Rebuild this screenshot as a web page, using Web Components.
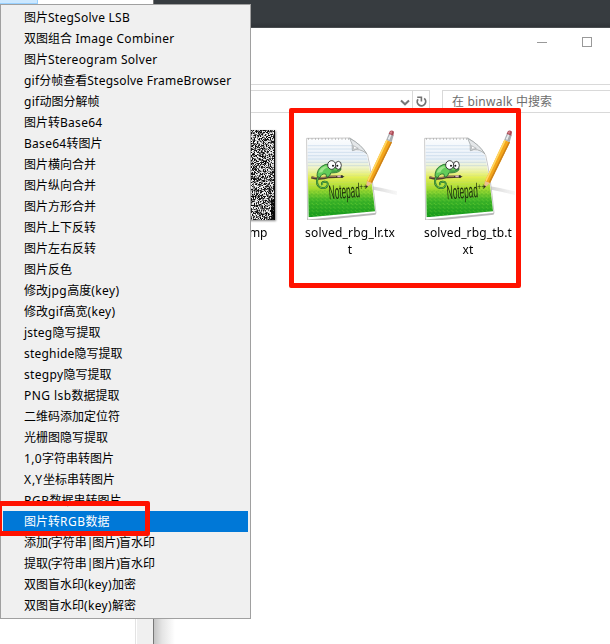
<!DOCTYPE html>
<html lang="zh-CN">
<head>
<meta charset="utf-8">
<title>binwalk</title>
<style>
html,body{margin:0;width:610px;height:644px;overflow:hidden;background:#fff}
body{font:12px "Noto Sans","Noto Sans CJK SC",sans-serif;color:#000}
</style>
</head>
<body>
<desk-top></desk-top>
<script>
const define = (name, html, ready) => customElements.define(name, class extends HTMLElement {
  connectedCallback() {
    if (this.shadowRoot) return;
    this.attachShadow({mode: 'open'}).innerHTML = html;
    if (ready) ready.call(this, this.shadowRoot);
  }
});

/* Text run whose latin parts are spaced so that the run has a given width. */
define('fit-text', `<style>:host{display:inline-block;white-space:pre}</style><span id="t"></span>`, function (root) {
  const t = root.getElementById('t');
  const parts = this.getAttribute('text').match(/[\u3000-\u9fff]+|[^\u3000-\u9fff]+/g);
  const latin = [];
  let n = 0;
  parts.forEach(p => {
    const s = document.createElement('span');
    s.textContent = p;
    if (!/[\u3000-\u9fff]/.test(p)) { latin.push(s); n += p.length; }
    t.append(s);
  });
  const w = +this.getAttribute('w');
  if (w && n) {
    const d = (w - t.getBoundingClientRect().width) / n;
    latin.forEach(s => s.style.letterSpacing = d + 'px');
  }
});

define('menu-item', `<style>
:host{display:flex;align-items:center;height:21px;padding-left:21px;line-height:21px}
:host([selected]){background:#0078d7;color:#fff}
</style><slot></slot>`);

define('context-menu', `<style>
:host{display:flex;flex-direction:column;box-sizing:border-box;width:251px;height:615px;padding:2px;border:1px solid #a0a0a0;background:#f0f0f0}
</style>`, function (root) {
  const rows = [
    ['图片StegSolve LSB',106],['双图组合 Image Combiner',150.5],['图片Stereogram Solver',133.5],
    ['gif分帧查看Stegsolve FrameBrowser',207.5],['gif动图分解帧',75.5],['图片转Base64',78.5],['Base64转图片',78.5],
    ['图片横向合并'],['图片纵向合并'],['图片方形合并'],['图片上下反转'],['图片左右反转'],['图片反色'],
    ['修改jpg高度(key)',95.5],['修改gif高宽(key)',91.5],['jsteg隐写提取',76.5],['steghide隐写提取',98.5],
    ['stegpy隐写提取',87.5],['PNG lsb数据提取',95.5],['二维码添加定位符'],['光栅图隐写提取'],
    ['1,0字符串转图片',90],['X,Y坐标串转图片',91],['RGB数据串转图片',97.5],['图片转RGB数据',85.5],
    ['添加(字符串|图片)盲水印',131],['提取(字符串|图片)盲水印',131],['双图盲水印(key)加密',112],['双图盲水印(key)解密',112]];
  rows.forEach(([text, w], i) => {
    const item = document.createElement('menu-item');
    if (i === 24) item.setAttribute('selected', '');
    const f = document.createElement('fit-text');
    f.setAttribute('text', text);
    if (w) f.setAttribute('w', w);
    item.append(f);
    root.append(item);
  });
});

/* Black and white random pixel thumbnail. */
define('noise-thumb', `<style>:host{display:block;width:46px;height:90px;box-shadow:1px 1px 2px #888}canvas{display:block}</style><canvas width="46" height="90"></canvas>`, function (root) {
  const c = root.querySelector('canvas').getContext('2d');
  let s = 12345;
  const rand = () => {
    s = (s + 0x6D2B79F5) | 0;
    let t = Math.imul(s ^ (s >>> 15), 1 | s);
    t = (t + Math.imul(t ^ (t >>> 7), 61 | t)) ^ t;
    return ((t ^ (t >>> 14)) >>> 0) % 256;
  };
  for (let y = 0; y < 90; y++) for (let x = 0; x < 46; x++) {
    const r = rand();
    const dark = x > 44 || (x > 41 && y > 68 && r > 120);
    const v = dark ? 8 : r < 85 ? r * .5 : r > 155 ? 190 + r % 66 : r;
    c.fillStyle = `rgb(${v},${v},${v})`;
    c.fillRect(x, y, 1, 1);
  }
});

define('notepad-icon', `<style>:host{display:block;width:100px;height:95px}svg{display:block}
text{font-family:"Liberation Sans",Arial,sans-serif}</style>
<svg width="100" height="95" viewBox="48 60 300 285">
<defs>
<linearGradient id="p" x1="0" y1="0" x2="0" y2="1">
<stop offset="0" stop-color="#fcfdfe"/><stop offset=".27" stop-color="#e8f0f8"/><stop offset=".38" stop-color="#f1f5c4"/>
<stop offset=".5" stop-color="#e2ee50"/><stop offset=".63" stop-color="#a8dc30"/><stop offset=".78" stop-color="#3fb528"/><stop offset="1" stop-color="#149a1c"/></linearGradient>
<linearGradient id="s" x1="0" x2="1"><stop offset="0" stop-color="#777" stop-opacity=".4"/><stop offset="1" stop-color="#aaa" stop-opacity=".1"/></linearGradient>
<pattern id="g" width="13" height="11" patternUnits="userSpaceOnUse"><path d="M1 2h3v3h-3zM8 7h3v2h-3z" fill="#087d1a" opacity=".35"/><path d="M6 1h3v2h-3zM2 8h3v2h-3z" fill="#b4f34b" opacity=".4"/></pattern>
<clipPath id="c"><path d="M67 103L194 102Q210 119 210 138Q230 131 245 151Q258 202 270 319L71 337Z"/></clipPath>
</defs>
<path d="M245 241Q284 247 336 259L335 270Q300 261 257 253Z" fill="url(#s)"/>
<path d="M66 340L70 350L272 329L273 320Z" fill="#777" opacity=".5"/>
<path d="M65 100L195 99Q232 122 248 151Q262 210 273 325L68 345Z" fill="#fff" stroke="#aaa" stroke-width="2"/>
<g clip-path="url(#c)">
<rect x="60" y="98" width="220" height="240" fill="url(#p)"/>
<g stroke="#a9c4de" stroke-width="1.5" opacity=".8"><path d="M66 122H206M66 132H210M66 142H250M66 152H250M66 162H255M66 172H255M66 182H255"/><path d="M66 192H260M66 202H260M66 212H260M66 222H260M66 232H260M66 242H260" opacity=".3"/></g>
<path d="M60 258L280 245V350H60Z" fill="url(#g)"/>
</g>
<path d="M70 102H192" stroke="#999" stroke-width="5" stroke-dasharray="2 8"/>
<path d="M194 100Q205 117 202 137Q224 128 245 146Q230 119 194 100Z" fill="#e4e7e9" stroke="#8e9496" stroke-width="2"/>
<path d="M205 122L206 133L220 130Z" fill="#fff" stroke="#a1a5a7" stroke-width="2"/>
<path d="M79 217Q105 225 132 216L174 215" stroke="#4d3d2e" stroke-width="7" fill="none"/>
<path d="M81 216Q105 221 132 214L153 214" stroke="#9a7a58" stroke-width="3.5" fill="none"/>
<path d="M157 214L167 214" stroke="#ddb3c2" stroke-width="5"/><path d="M168 210L179 215L168 219Z" fill="#333"/>
<path d="M99 217Q91 239 105 247Q123 254 128 240Q130 229 118 230Q108 232 112 240" fill="none" stroke="#23672b" stroke-width="6"/>
<path d="M99 217Q91 239 105 247Q123 254 128 240Q130 229 118 230Q108 232 112 240" fill="none" stroke="#6cc94c" stroke-width="2.5"/>
<path d="M96 214Q96 193 110 184Q122 174 137 179L151 188Q164 188 168 190Q169 200 151 203L137 204Q137 213 126 217L122 207Q109 205 105 218Z" fill="#62cc5a" stroke="#1c6029" stroke-width="2.3"/>
<path d="M101 203Q105 189 119 184L130 185Q115 192 112 202Z" fill="#a0e68a"/>
<path d="M139 198Q155 202 168 192" stroke="#185b25" stroke-width="2" fill="none"/>
<ellipse cx="140" cy="180" rx="12" ry="13" fill="#fff" stroke="#222" stroke-width="2.5"/>
<ellipse cx="160" cy="181" rx="9" ry="12" fill="#fff" stroke="#222" stroke-width="2.5"/>
<circle cx="144" cy="182" r="3" fill="#111"/><circle cx="157" cy="182" r="3" fill="#111"/>
<text transform="translate(133 283) rotate(-4) scale(.4 1)" x="0" y="0" font-size="60" textLength="232" lengthAdjust="spacingAndGlyphs" fill="#1a2a0c">Notepad</text>
<path d="M246 228L304 104L321 112L261 234L243 249Z" fill="#f4a61a"/>
<path d="M247 226L304 104L309 106L251 229Z" fill="#ffd864"/>
<path d="M257 232L317 110L321 112L261 234Z" fill="#cc8018"/>
<path d="M246 228L261 234L243 249Z" fill="#eac191"/><path d="M244 241L249 244L242 251Z" fill="#292d26"/>
<text x="223" y="256" font-size="25" textLength="23" lengthAdjust="spacingAndGlyphs" fill="#14200a">++</text>
<path d="M304 104L312 85L326 91L320 112Z" fill="#a8adb1"/><path d="M308 102L316 86L320 88L313 105Z" fill="#e9edef"/>
<path d="M311 86L315 78Q321 74 327 80L325 92Z" fill="#a94b57"/><path d="M314 84L318 78L322 80L319 87Z" fill="#d8838b"/>
</svg>`);

define('file-item', `<style>
:host{display:flex;flex-direction:column;align-items:center;width:118px}
.label{display:flex;flex-direction:column;align-items:center;margin:4px 2px 0 0;line-height:17px}
</style><slot name="icon"></slot><div class="label"><slot></slot></div>`);

define('title-bar', `<style>
:host{display:flex;height:56px;justify-content:flex-end;align-items:flex-start;border-bottom:1px solid #d9d9d9}
svg{display:block}
</style><svg width="80" height="30"><path d="M7 14.5H17" stroke="#999"/><rect x="52.5" y="9.5" width="9" height="9" fill="none" stroke="#999"/></svg>`);

define('address-row', `<style>
:host{display:flex;height:28px;padding-top:5px;box-sizing:border-box;border-bottom:1px solid #d9d9d9;overflow:hidden}
.box{display:flex;flex:none;box-sizing:border-box;height:23px;border:1px solid #d9d9d9;border-bottom:0}
.addr{width:276px;justify-content:flex-end}
.reload{width:16px;border-left:1px solid #d9d9d9}
.search{width:190px;margin-left:12px;padding-left:9px;color:#6d6d6d;line-height:22px}
svg{display:block}
</style><div class="box addr"><svg width="16" height="21"><path d="M5 9.5L9 13.3L13 9.5" fill="none" stroke="#777" stroke-width="2"/></svg>
<div class="reload"><svg width="16" height="21" viewBox="0 0 16 21"><path d="M11.2 7.4A4.2 4.2 0 1 1 5 8.2" fill="none" stroke="#737373" stroke-width="1.8"/><path d="M4.2 6.2H8.4V10.4" fill="none" stroke="#737373" stroke-width="1.6"/></svg></div></div>
<div class="box search"><fit-text text="在 binwalk 中搜索" w="100"></fit-text></div>`);

define('explorer-window', `<style>
:host{display:flex;flex-direction:column;background:#fff}
.files{display:flex;padding-top:12px}
.bmp{width:138px;box-sizing:border-box;padding:5px 0 0 75px}
.bmp fit-text{margin:3px 0 0 13px;line-height:20px}
</style><title-bar></title-bar><address-row></address-row>
<div class="files"><div class="bmp"><noise-thumb></noise-thumb><fit-text text="bmp" w="25"></fit-text></div>
<file-item><notepad-icon slot="icon"></notepad-icon><fit-text text="solved_rbg_lr.tx" w="90"></fit-text><fit-text text="t"></fit-text></file-item>
<file-item><notepad-icon slot="icon"></notepad-icon><fit-text text="solved_rbg_tb.t" w="88"></fit-text><fit-text text="xt" w="11"></fit-text></file-item></div>`);

define('mark-box', `<style>:host{display:block;position:absolute;box-sizing:border-box;border:5px solid #ff1200;border-radius:2px}</style>`);

define('desk-top', `<style>
:host{display:grid;grid-template-columns:154px 456px;width:610px;height:644px;position:relative;overflow:hidden}
.left{display:flex;flex-direction:column;justify-content:space-between;background:#fff;border-right:1px solid #777;box-sizing:border-box}
.tab{width:38px;height:4px;box-sizing:border-box;background:#cce8ff;border:solid #99d1ff;border-width:0 1px 1px 0}
.scroll{align-self:flex-end;width:18px;height:25px;box-sizing:border-box;border-left:1px solid #e3e3e3;background:linear-gradient(90deg,#fff 1px,#f0f0f0 1px)}
.right{display:flex;flex-direction:column}
.dark{height:28px;background:linear-gradient(#373c40 0 22px,#303438 27px,#4a4e51 27px)}
explorer-window{flex:1;background:linear-gradient(90deg,#c4c4c4,#e4e4e4 8px,#fff 21px)}
context-menu{position:absolute;left:0;top:4px}
.m1{left:289px;top:108px;width:232px;height:180px}
.m2{left:-3px;top:501px;width:153px;height:35px}
</style><div class="left"><div class="tab"></div><div class="scroll"></div></div>
<div class="right"><div class="dark"></div><explorer-window></explorer-window></div>
<context-menu></context-menu><mark-box class="m1"></mark-box><mark-box class="m2"></mark-box>`);
</script>
</body>
</html>
